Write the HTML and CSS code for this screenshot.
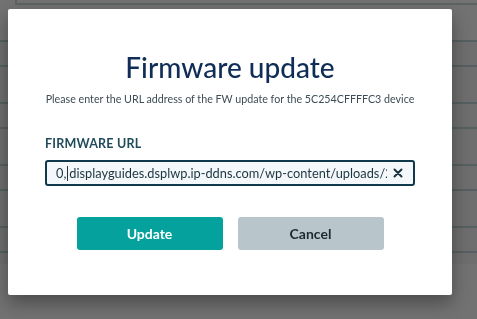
FILE: index.html
```html
<!DOCTYPE html>
<html>
<head>
<meta charset="utf-8">
<link rel="stylesheet" href="styles.css">
</head>
<body>
<div class="page">
  <div class="topbox"></div>
  <div class="table">
    <div class="row short"></div>
    <div class="row tall"></div>
    <div class="row short"></div>
    <div class="row tall"></div>
    <div class="row short"></div>
    <div class="row tall"></div>
    <div class="row short"></div>
    <div class="row last"></div>
  </div>
</div>
<div class="modal">
  <h1 class="title">Firmware update</h1>
  <p class="subtitle">Please enter the URL address of the FW update for the 5C254CFFFFC3 device</p>
  <label class="label">FIRMWARE URL</label>
  <div class="field">
    <div class="value">0,<span class="caret"></span>displayguides.dsplwp.ip-ddns.com/wp-content/uploads/20</div>
    <svg class="clear" width="10" height="10" viewBox="0 0 10 10"><path d="M1.5 1.5 L8.5 8.5 M8.5 1.5 L1.5 8.5" stroke="#1b3440" stroke-width="2" stroke-linecap="round"/></svg>
  </div>
  <div class="actions">
    <button class="btn primary">Update</button>
    <button class="btn secondary">Cancel</button>
  </div>
</div>
</body>
</html>
```
FILE: styles.css
```css
html, body {
  margin: 0;
  padding: 0;
}
body {
  background: #727272;
  width: 477px;
  height: 319px;
  overflow: hidden;
  font-family: "Lato", "Open Sans", sans-serif;
}
.page {
  height: 319px;
}
.topbox {
  margin-left: 15px;
  height: 3px;
  border-left: 2px solid #5b6363;
  border-bottom: 2px solid #5b6363;
  background: #737373;
}
.table {
  margin-top: 35px;
  background: #6e6e6e;
}
.row {
  border-top: 2px solid #566060;
  box-sizing: border-box;
}
.row.short { height: 25px; }
.row.tall { height: 37px; }
.row.last { height: 13px; }
.modal {
  position: fixed;
  left: 8px;
  top: 9px;
  width: 444px;
  height: 286px;
  box-sizing: border-box;
  background: #ffffff;
  border-radius: 2px;
  box-shadow: 0 8px 18px rgba(0, 0, 0, 0.35);
  padding: 0 37px;
  display: flex;
  flex-direction: column;
}
.title {
  margin: 42px 0 0;
  text-align: center;
  font-size: 28px;
  line-height: 32px;
  font-weight: 500;
  color: #0f2d57;
}
.subtitle {
  margin: 9px 0 0;
  text-align: center;
  font-size: 10.7px;
  line-height: 13px;
  color: #3d4c55;
}
.label {
  margin: 32px 0 0;
  font-size: 12.5px;
  line-height: 14px;
  font-weight: 700;
  letter-spacing: 0.2px;
  color: #1f4b5b;
}
.field {
  margin-top: 9px;
  height: 26px;
  box-sizing: border-box;
  border: 2px solid #103a4c;
  border-radius: 3px;
  background: #f5f8fa;
  display: flex;
  align-items: center;
  padding: 0 10px 0 9px;
  gap: 6px;
}
.value {
  flex: 1;
  overflow: hidden;
  white-space: nowrap;
  font-size: 12.8px;
  color: #1b3440;
}
.caret {
  display: inline-block;
  width: 1px;
  height: 15px;
  background: #1b3440;
  vertical-align: -3px;
  margin: 0 1px 0 1px;
}
.clear {
  flex: none;
}
.actions {
  margin-top: 31px;
  display: flex;
  justify-content: center;
  gap: 15px;
}
.btn {
  width: 146px;
  height: 33px;
  border: none;
  border-radius: 3px;
  font-family: inherit;
  font-size: 14px;
  font-weight: 700;
}
.primary {
  background: #05a19c;
  color: #ffffff;
}
.secondary {
  background: #b8c5ca;
  color: #1d2a30;
}
```
